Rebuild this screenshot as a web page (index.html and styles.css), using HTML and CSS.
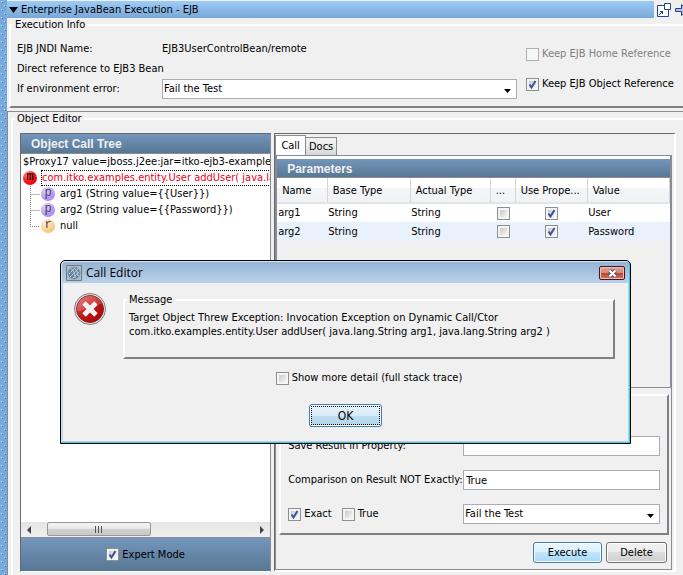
FILE: index.html
```html
<!DOCTYPE html>
<html lang="en">
  <head>
    <meta charset="UTF-8" />
    <title>Enterprise JavaBean Execution - EJB</title>
    <meta name="viewport" content="width=device-width, initial-scale=1.0" />
    <link rel="stylesheet" href="styles.css">
  </head>
  <body>
    <main class="page">
      <header class="page-header">
        <h1 class="titlebar">
          <svg width="9" height="6" viewBox="0 0 9 6"><path d="M0 0h9L4.500 6z" /></svg>
          Enterprise JavaBean Execution - EJB
        </h1>
        <div class="tools">
          <button type="button" aria-label="Pop out">
            <svg width="14" height="14" viewBox="0 0 14 14" fill="none" stroke="#24448c">
              <path d="M7 2.500H.5v11h11V7" fill="#fff" />
              <path d="M7.500.5h6v6h-6z" fill="#fff" />
              <path d="M2 12l4-4M3 8.500h2.500v2.500" />
            </svg>
          </button>
          <button type="button" aria-label="Dock">
            <svg width="14" height="14" viewBox="0 0 14 14" fill="#b4c4dc" stroke="#24448c">
              <path d="M.5 5.500h6v-4L12 7l-5.500 5.500v-4h-6z" />
            </svg>
          </button>
        </div>
      </header>

      <!-- Execution info -->
      <fieldset class="group">
        <legend>Execution Info</legend>
        <div class="info">
          <div class="info-fields">
            <span>EJB JNDI Name:</span>
            <span>EJB3UserControlBean/remote</span>
            <span class="wide">Direct reference to EJB3 Bean</span>
            <label for="env-error">If environment error:</label>
            <select id="env-error">
              <option>Fail the Test</option>
            </select>
          </div>
          <div class="info-checks">
            <label class="check disabled"><input type="checkbox" disabled />Keep EJB Home Reference</label>
            <label class="check"><input type="checkbox" checked />Keep EJB Object Reference</label>
          </div>
        </div>
      </fieldset>

      <!-- Object editor -->
      <section class="editor-wrap">
        <fieldset class="group editor-group">
          <legend>Object Editor</legend>
          <div class="editor">
            <section class="tree-panel">
              <h2 class="panel-title">Object Call Tree</h2>
              <ul class="tree">
                <li>$Proxy17 value=jboss.j2ee:jar=itko-ejb3-examples</li>
                <li class="call">
                  <span class="ball red">m</span>
                  <span class="selected">com.itko.examples.entity.User addUser( java.lang</span>
                </li>
                <li class="child">
                  <svg class="branch" width="10" height="16"><path d="M.5 0V16M.5 8.500H10" /></svg>
                  <span class="ball purple">p</span>arg1 (String value={{User}})
                </li>
                <li class="child">
                  <svg class="branch" width="10" height="16"><path d="M.5 0V16M.5 8.500H10" /></svg>
                  <span class="ball purple">p</span>arg2 (String value={{Password}})
                </li>
                <li class="child">
                  <svg class="branch" width="10" height="16"><path d="M.5 0V8.500H10" /></svg>
                  <span class="ball orange">r</span>null
                </li>
              </ul>
              <div class="scrollbar">
                <button type="button" aria-label="Scroll left">
                  <svg width="4" height="8" viewBox="0 0 4 8"><path d="M4 0v8L0 4z" fill="#444" /></svg>
                </button>
                <div class="track">
                  <div class="thumb">
                    <svg width="9" height="7" viewBox="0 0 9 7"><path d="M1.500 0v7M4.500 0v7M7.500 0v7" stroke="#555" /></svg>
                  </div>
                </div>
                <button type="button" aria-label="Scroll right">
                  <svg width="4" height="8" viewBox="0 0 4 8"><path d="M0 0v8l4-4z" fill="#444" /></svg>
                </button>
              </div>
              <div class="tree-footer">
                <label class="check"><input type="checkbox" checked />Expert Mode</label>
              </div>
            </section>

            <section class="call-panel">
              <div class="tabs" role="tablist">
                <button type="button" class="tab active" role="tab" aria-selected="true">Call</button>
                <button type="button" class="tab" role="tab" aria-selected="false">Docs</button>
              </div>
              <div class="tab-body">
                <div class="params">
                  <h2 class="panel-title">Parameters</h2>
                  <table>
                    <colgroup>
                      <col class="c-name" /><col class="c-base" /><col class="c-actual" />
                      <col class="c-null" /><col class="c-prop" /><col />
                    </colgroup>
                    <thead>
                      <tr><th>Name</th><th>Base Type</th><th>Actual Type</th><th>...</th><th>Use Prope...</th><th>Value</th></tr>
                    </thead>
                    <tbody>
                      <tr>
                        <td>arg1</td><td>String</td><td>String</td>
                        <td class="mid"><input type="checkbox" aria-label="arg1 null" /></td>
                        <td class="mid"><input type="checkbox" aria-label="arg1 use property" checked /></td>
                        <td>User</td>
                      </tr>
                      <tr>
                        <td>arg2</td><td>String</td><td>String</td>
                        <td class="mid"><input type="checkbox" aria-label="arg2 null" /></td>
                        <td class="mid"><input type="checkbox" aria-label="arg2 use property" checked /></td>
                        <td>Password</td>
                      </tr>
                    </tbody>
                  </table>
                </div>
                <form class="result-form">
                  <label for="save-prop">Save Result in Property:</label>
                  <input type="text" id="save-prop" />
                  <label for="comparison">Comparison on Result NOT Exactly:</label>
                  <input type="text" id="comparison" value="True" />
                  <div class="options">
                    <label class="check"><input type="checkbox" checked />Exact</label>
                    <label class="check"><input type="checkbox" />True</label>
                  </div>
                  <select aria-label="On result">
                    <option>Fail the Test</option>
                  </select>
                </form>
                <div class="actions">
                  <button type="button" class="btn primary">Execute</button>
                  <button type="button" class="btn">Delete</button>
                </div>
              </div>
            </section>
          </div>
        </fieldset>
      </section>
    </main>

    <!-- Error dialog -->
    <div class="dialog" role="dialog" aria-labelledby="dialog-title">
      <div class="dialog-bar">
        <svg width="16" height="16" viewBox="0 0 16 16">
          <path d="M.5.5h15v15H.5z" fill="#b4bcc2" stroke="#6f7c86" />
          <circle cx="8" cy="8" r="6" fill="#6288a6" />
          <path d="M3 5l3-3M3 9l7-7M4 12l9-9M7 13l7-7M11 13l2-2" stroke="#d6e4ee" stroke-dasharray="2 1" />
          <path d="M4 3c3 1 5 5 5 10M7 2c3 2 5 5 5 9" fill="none" stroke="#bcd0de" />
          <circle cx="8" cy="8" r="6" fill="none" stroke="#7d93a3" />
        </svg>
        <h2 id="dialog-title">Call Editor</h2>
        <button type="button" class="close" aria-label="Close">
          <svg width="11" height="9" viewBox="0 0 11 9">
            <path d="M2.500 1.500l6 6m0-6l-6 6" stroke="#555a6e" stroke-width="4" />
            <path d="M2.500 1.500l6 6m0-6l-6 6" stroke="#fff" stroke-width="2" />
          </svg>
        </button>
      </div>
      <div class="dialog-body">
        <svg class="error-icon" width="32" height="32" viewBox="0 0 32 32">
          <defs>
            <linearGradient id="err" x1="0" y1="0" x2="1" y2="1">
              <stop offset="0" stop-color="#e06a66" />
              <stop offset=".5" stop-color="#c01414" />
              <stop offset="1" stop-color="#a00808" />
            </linearGradient>
          </defs>
          <circle cx="16" cy="16" r="15.500" fill="#e6e6e6" stroke="#7c7c7c" />
          <circle cx="16" cy="16" r="13.500" fill="url(#err)" stroke="#8e1a1a" />
          <path d="M2.500 16a13.500 13.500 0 0 1 26-5C20 10 12 18 3 18z" fill="#fff" opacity=".18" />
          <path d="M10 10l12 12m0-12L10 22" stroke="#f2f2f2" stroke-width="5" />
        </svg>
        <fieldset class="group message">
          <legend>Message</legend>
          <p>
            Target Object Threw Exception: Invocation Exception on Dynamic Call/Ctor<br />
            com.itko.examples.entity.User addUser( java.lang.String arg1, java.lang.String arg2 )
          </p>
        </fieldset>
        <label class="check detail"><input type="checkbox" />Show more detail (full stack trace)</label>
      </div>
      <div class="dialog-footer">
        <button type="button" class="btn ok">OK</button>
      </div>
    </div>
  </body>
</html>
```

FILE: styles.css
```css
/* General */
* {
  box-sizing: border-box;
}
body {
  position: relative;
  margin: 0;
  min-height: 100vh;
  display: flex;
  padding-left: 7px;
  overflow: hidden;
  font-family: "DejaVu Sans Condensed", Tahoma, sans-serif;
  font-size: 11px;
  line-height: 14px;
  color: #000;
  background: #78a9db url("data:image/svg+xml,%3Csvg xmlns='http://www.w3.org/2000/svg' width='6' height='8'%3E%3Cpath d='M1 1h1v1H1zM4 5h1v1H4z' fill='%23c4e2f6'/%3E%3Cpath d='M2 2h1v1H2zM5 6h1v1H5z' fill='%234a7fb6'/%3E%3C/svg%3E");
}
h1,
h2,
p,
ul {
  margin: 0;
  padding: 0;
}
button,
input,
select {
  font: inherit;
  color: inherit;
  margin: 0;
}
button {
  padding: 0;
  border: none;
  background: none;
}
svg {
  display: block;
  flex: none;
}

/* Page */
.page {
  flex: 1;
  min-width: 0;
  display: flex;
  flex-direction: column;
  padding-top: 1px;
  background: #f0f0f0;
}
.page-header {
  display: flex;
  height: 17px;
}
.titlebar {
  flex: 1;
  display: flex;
  align-items: center;
  gap: 3px;
  padding-left: 2px;
  font-size: 11px;
  font-weight: normal;
  background: linear-gradient(#9dccf9, #79a7d6);
}
.tools {
  display: flex;
  align-items: center;
  gap: 4px;
  width: 29px;
  padding-left: 3px;
}

/* Group boxes */
.group {
  min-width: 0;
  margin: 0 0 0 2px;
  padding: 0 0 0 2px;
  border: 2px solid;
  border-color: #fff #808080 #808080 #fff;
}
.group legend {
  padding: 0 2px;
}
.page > .group,
.editor-group {
  border-right: none;
}

/* Check boxes */
input[type="checkbox"] {
  appearance: none;
  flex: none;
  display: block;
  width: 13px;
  height: 13px;
  border: 1px solid #8e8f8f;
  background: linear-gradient(135deg, #c4c8cf, #f6f6f6) content-box, #f4f4f4;
  padding: 2px;
}
input[type="checkbox"]:checked {
  background: url("data:image/svg+xml,%3Csvg xmlns='http://www.w3.org/2000/svg' viewBox='0 0 11 11'%3E%3Cpath d='M2.500 5.500l2 3L8.500 2' fill='none' stroke='%233a519c' stroke-width='2'/%3E%3C/svg%3E") padding-box,
    linear-gradient(135deg, #c4c8cf, #f6f6f6) content-box, #f4f4f4;
}
input[type="checkbox"]:disabled {
  border-color: #b1b1b1;
  background: #f6f6f6;
}
.check {
  display: flex;
  align-items: center;
  gap: 3px;
  white-space: nowrap;
}
.disabled {
  color: #808080;
}

/* Fields */
input[type="text"],
select {
  width: 100%;
  min-width: 0;
  height: 20px;
  padding: 0 2px;
  border: 1px solid #abadb3;
  border-radius: 0;
  background-color: #fff;
}
select {
  appearance: none;
  padding: 0 1px;
  background-image: url("data:image/svg+xml,%3Csvg xmlns='http://www.w3.org/2000/svg' width='7' height='4'%3E%3Cpath d='M0 0h7L3.500 4z'/%3E%3C/svg%3E");
  background-repeat: no-repeat;
  background-position: right 5px top 9px;
}

/* Execution info */
.info {
  display: flex;
  gap: 9px;
  padding: 7px 0 7px 4px;
}
.info-fields {
  flex: 1;
  display: grid;
  grid-template-columns: 145px 1fr;
  grid-auto-rows: 20px;
  align-items: center;
}
.wide {
  grid-column: 1 / -1;
}
.info-checks {
  display: flex;
  flex-direction: column;
  justify-content: space-around;
  width: 157px;
}

/* Object editor */
.editor-wrap {
  flex: 1;
  display: flex;
  margin-top: 3px;
  border: 1px solid #898c95;
  border-width: 1px 0 0 1px;
}
.editor-group {
  flex: 1;
  margin-left: 3px;
  border-bottom: none;
}
.editor {
  display: grid;
  grid-template-columns: 5fr 8fr;
  gap: 3px;
  height: 100%;
  padding: 7px 7px 3px 5px;
}
.panel-title {
  height: 18px;
  padding-left: 10px;
  font-family: "Liberation Sans", Arial, sans-serif;
  font-size: 12px;
  font-weight: bold;
  line-height: 20px;
  color: #f0f0f0;
  background: linear-gradient(#7396bb, #587794);
}

/* Call tree */
.tree-panel {
  min-width: 0;
  display: flex;
  flex-direction: column;
  border: 1px solid #696969;
  border-right-color: #898c95;
  border-bottom-color: #fff;
  background: #fff;
}
.tree-panel .panel-title {
  border-bottom: 1px solid #898c95;
  height: 20px;
}
.tree {
  flex: 1;
  padding-left: 2px;
  overflow: hidden;
  list-style: none;
  white-space: nowrap;
}
.tree li {
  display: flex;
  align-items: center;
  height: 16px;
}
.call {
  gap: 4px;
}
.child {
  padding-left: 7px;
}
.selected {
  height: 16px;
  line-height: 14px;
  border: 1px dotted #000;
  color: #f00018;
}
.ball {
  flex: none;
  width: 14px;
  height: 14px;
  margin-right: 5px;
  border-radius: 50%;
  font-family: "Liberation Mono", "Courier New", monospace;
  font-size: 12px;
  line-height: 13px;
  text-align: center;
}
.red {
  margin-right: 0;
  font-weight: bold;
  color: #400;
  background: radial-gradient(circle at 35% 25%, #ff9a9a, #f81414 50%, #d00000);
}
.purple {
  color: #444;
  background: radial-gradient(circle at 35% 25%, #e0d4ff, #b79bfa 55%, #9878e8);
}
.orange {
  color: #444;
  background: radial-gradient(circle at 35% 25%, #fff2dc, #fbd193 55%, #e8b468);
}
.branch {
  margin-right: 1px;
}
.branch path {
  fill: none;
  stroke: #777;
  stroke-dasharray: 1 1;
}
.scrollbar {
  display: flex;
  height: 15px;
  background: linear-gradient(#e4e4e4, #f0f0f0);
}
.scrollbar button {
  display: flex;
  align-items: center;
  justify-content: center;
  width: 16px;
}
.track {
  flex: 1;
  padding-left: 10px;
}
.thumb {
  display: flex;
  align-items: center;
  justify-content: center;
  width: 50%;
  height: 14px;
  border: 1px solid #979797;
  border-radius: 2px;
  background: linear-gradient(#f5f5f5, #e9e9eb 45%, #d0d1d3 50%, #c8c8ca);
}
.tree-footer {
  display: flex;
  align-items: center;
  justify-content: center;
  height: 34px;
  border-top: 1px solid #898c95;
  background: linear-gradient(#7396bb, #587794);
}

/* Call panel */
.call-panel {
  min-width: 0;
  display: flex;
  flex-direction: column;
  border: 1px solid #696969;
  border-right: 2px solid #fff;
  border-bottom: 2px solid #fff;
}
.tabs {
  display: flex;
  align-items: flex-end;
  height: 21px;
}
.tab {
  width: 31px;
  height: 18px;
  border: 1px solid #898c95;
  border-width: 1px 1px 0 0;
  background: linear-gradient(#f2f2f2, #ebebeb 50%, #d5d5d5);
}
.tab.active {
  height: 20px;
  border-left-width: 1px;
  background: #fff;
}
.tab-body {
  flex: 1;
  display: flex;
  flex-direction: column;
  margin-right: 2px;
  border: 1px solid #898c95;
}
.params {
  flex: 1;
  padding-top: 3px;
  border: 1px solid #898c95;
  border-top: 0 solid #fff;
  background: linear-gradient(#fff, #fff) top / 100% 3px no-repeat;
}
.params .panel-title {
  height: 19px;
  border-bottom: 1px solid #898c95;
}
table {
  width: 100%;
  table-layout: fixed;
  border-collapse: collapse;
}
.c-name {
  width: 50px;
}
.c-base {
  width: 83px;
}
.c-actual {
  width: 80px;
}
.c-null {
  width: 25px;
}
.c-prop {
  width: 72px;
}
th {
  height: 25px;
  padding: 2px 0 0 5px;
  border-right: 1px solid #d5d5d5;
  border-bottom: 2px solid #e3e4e6;
  font-weight: normal;
  text-align: left;
  white-space: nowrap;
  background: linear-gradient(#fff 40%, #f4f5f7 42%, #f1f2f4);
}
td {
  height: 19px;
  padding: 0 0 0 1px;
  background: #fff;
}
tbody tr:nth-child(2) td {
  background: #e9f1fc;
}
.mid input[type="checkbox"] {
  margin: 0 auto;
}
.result-form {
  display: grid;
  grid-template-columns: 175px 1fr;
  gap: 14px 0;
  align-items: center;
  margin: 6px 2px 0 3px;
  padding: 40px 7px 9px;
  border: 2px solid;
  border-color: #fff #808080 #808080 #fff;
  white-space: nowrap;
}
.options {
  display: flex;
  gap: 10px;
}
.actions {
  display: flex;
  justify-content: flex-end;
  gap: 4px;
  padding: 7px 4px 6px;
}

/* Buttons */
.btn {
  width: 61px;
  height: 21px;
  border: 1px solid #707070;
  border-radius: 3px;
  background: linear-gradient(#f2f2f2, #ebebeb 50%, #dddddd 50%, #cfcfcf);
  box-shadow: inset 0 0 0 1px #fcfcfc;
}
.primary {
  width: 69px;
  border-color: #3c7fb1;
  background: linear-gradient(#eaf6fd, #d9f0fc 50%, #bee6fd 50%, #a7d9f5);
}
.ok {
  width: 73px;
  height: 23px;
  border-color: #3c7fb1;
  font-size: 12px;
  background: linear-gradient(#e8f4fb, #d6ebf6 50%, #c0dfef 50%, #b2d5e8);
  outline: 1px dotted #000;
  outline-offset: -3px;
}

/* Dialog */
.dialog {
  position: absolute;
  top: 260px;
  left: 60px;
  right: 52px;
  padding: 0 2px 2px;
  border: 1px solid #000;
  border-radius: 5px 5px 0 0;
  background: linear-gradient(#95b2d2, #b9d1ea 22px);
  box-shadow: inset -1px -1px 0 #2fd0e8, inset 1px 1px 0 #d4e4f4;
}
.dialog-bar {
  display: flex;
  align-items: center;
  gap: 4px;
  height: 22px;
  padding: 2px 3px 0;
}
.dialog-bar h2 {
  flex: 1;
  font-family: "Open Sans", "Segoe UI", sans-serif;
  font-size: 12px;
  font-weight: normal;
}
.close {
  display: flex;
  align-items: center;
  justify-content: center;
  width: 26px;
  height: 14px;
  border: 1px solid #431422;
  border-radius: 2px;
  background: linear-gradient(#e3a59b, #d5867a 50%, #b8432f 50%, #cf7a67);
  box-shadow: inset 0 0 0 1px #eebfb6;
}
.dialog-body {
  display: grid;
  grid-template-columns: 32px 1fr;
  gap: 12px 17px;
  padding: 10px 13px 0 11px;
  background: #f0f0f0;
}
.message {
  height: 66px;
  margin: 0;
}
.message p {
  padding: 4px 2px;
  white-space: nowrap;
}
.detail {
  grid-column: 2;
  justify-self: center;
}
.dialog-footer {
  display: flex;
  justify-content: center;
  padding: 19px 0 14px;
  background: #f0f0f0;
}
```
